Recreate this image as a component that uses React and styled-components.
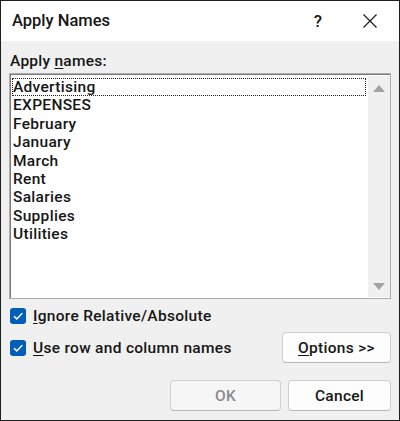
import React from "react";
import styled, { createGlobalStyle } from "styled-components";

const Global = createGlobalStyle`
  html, body { margin: 0; padding: 0; background: #ffffff; }
  * { box-sizing: border-box; }
  body { font-family: Roboto, "Noto Sans", sans-serif; }
`;

const Window = styled.div`
  width: 400px;
  height: 421px;
  border: 1px solid #1f1f1f;
  background: #f0f0f0;
  display: flex;
  flex-direction: column;
  color: #161616;
`;

const TitleBar = styled.div`
  height: 40px;
  background: #ffffff;
  display: flex;
  align-items: center;
  padding-left: 11px;
`;

const Title = styled.div`
  flex: 1;
  font-size: 16.5px;
  font-weight: 500;
  padding-bottom: 2px;
`;

const TitleButton = styled.div`
  width: ${(p) => p.$w}px;
  height: 40px;
  display: flex;
  align-items: center;
  justify-content: center;
  font-size: 17px;
  font-weight: 500;
`;

const Body = styled.div`
  flex: 1;
  display: flex;
  flex-direction: column;
  padding: 11px 8px 10px 8px;
`;

const Label = styled.div`
  font-size: 15.5px;
  font-weight: 500;
  letter-spacing: 0.25px;
  line-height: 18px;
  padding-left: 1px;
  margin-bottom: 3px;
`;

const U = styled.span`
  text-decoration: underline;
  text-underline-offset: 2px;
`;

const ListBox = styled.div`
  height: 226px;
  border: 1px solid #adadad;
  box-shadow: inset 1px 1px 0 #7a7a7a;
  background: #ffffff;
  display: flex;
  padding: 2px 0 1px 2px;
`;

const Items = styled.div`
  flex: 1;
  padding: 2px 2px 0 0;
`;

const Item = styled.div`
  font-size: 15.5px;
  font-weight: 500;
  letter-spacing: 0.3px;
  height: 18.4px;
  line-height: 18.4px;
  padding-left: 1px;
  outline: ${(p) => (p.$focus ? "1px dotted #222" : "none")};
  outline-offset: -1px;
`;

const ScrollBar = styled.div`
  width: 22px;
  background: #f0f0f0;
  display: flex;
  flex-direction: column;
  justify-content: space-between;
  align-items: center;
  padding: 8px 0 6px;
`;

const CheckRow = styled.div`
  display: flex;
  align-items: center;
  height: ${(p) => p.$h}px;
  margin-top: ${(p) => p.$mt}px;
  padding-left: 1px;
`;

const Box = styled.div`
  width: 16px;
  height: 16px;
  border-radius: 3px;
  background: #005fb8;
  display: flex;
  align-items: center;
  justify-content: center;
  margin-right: 7px;
`;

const CheckLabel = styled.div`
  flex: 1;
  font-size: 15.5px;
  font-weight: 500;
  letter-spacing: 0.3px;
`;

const Button = styled.div`
  width: ${(p) => p.$w}px;
  height: 31px;
  border: 1px solid #cfcfcf;
  border-bottom-color: #b8b8b8;
  border-radius: 4px;
  background: ${(p) => (p.$disabled ? "#f6f6f6" : "#fdfdfd")};
  color: ${(p) => (p.$disabled ? "#8a8a8a" : "#161616")};
  display: flex;
  align-items: center;
  justify-content: center;
  font-size: 15.5px;
  font-weight: 500;
  letter-spacing: 0.3px;
`;

const ButtonRow = styled.div`
  display: flex;
  justify-content: flex-end;
  gap: 7px;
  margin-top: 17px;
`;

const Check = () => (
  <svg width="12" height="12" viewBox="0 0 12 12">
    <path d="M2 6.2 L4.8 8.9 L10.2 3.2" fill="none" stroke="#fff" strokeWidth="1.5" />
  </svg>
);

const items = ["Advertising", "EXPENSES", "February", "January", "March", "Rent", "Salaries", "Supplies", "Utilities"];

export default function App() {
  return (
    <>
      <Global />
      <Window>
        <TitleBar>
          <Title>Apply Names</Title>
          <TitleButton $w={46}>?</TitleButton>
          <TitleButton $w={58}>
            <svg width="14" height="14" viewBox="0 0 14 14">
              <path d="M0.5 0.5 L13.5 13.5 M13.5 0.5 L0.5 13.5" stroke="#1a1a1a" strokeWidth="1.2" />
            </svg>
          </TitleButton>
        </TitleBar>
        <Body>
          <Label>
            Apply <U>n</U>ames:
          </Label>
          <ListBox>
            <Items>
              {items.map((it, i) => (
                <Item key={it} $focus={i === 0}>
                  {it}
                </Item>
              ))}
            </Items>
            <ScrollBar>
              <svg width="12" height="8" viewBox="0 0 12 8">
                <path d="M0 8 L6 1 L12 8 Z" fill="#a3a3a3" />
              </svg>
              <svg width="12" height="8" viewBox="0 0 12 8">
                <path d="M0 0 L6 7 L12 0 Z" fill="#a3a3a3" />
              </svg>
            </ScrollBar>
          </ListBox>
          <CheckRow $h={18} $mt={8}>
            <Box>
              <Check />
            </Box>
            <CheckLabel>
              <U>I</U>gnore Relative/Absolute
            </CheckLabel>
          </CheckRow>
          <CheckRow $h={31} $mt={7}>
            <Box>
              <Check />
            </Box>
            <CheckLabel>
              <U>U</U>se row and column names
            </CheckLabel>
            <Button $w={109}>
              <span>
                <U>O</U>ptions &gt;&gt;
              </span>
            </Button>
          </CheckRow>
          <ButtonRow>
            <Button $w={111} $disabled>
              OK
            </Button>
            <Button $w={103}>Cancel</Button>
          </ButtonRow>
        </Body>
      </Window>
    </>
  );
}
